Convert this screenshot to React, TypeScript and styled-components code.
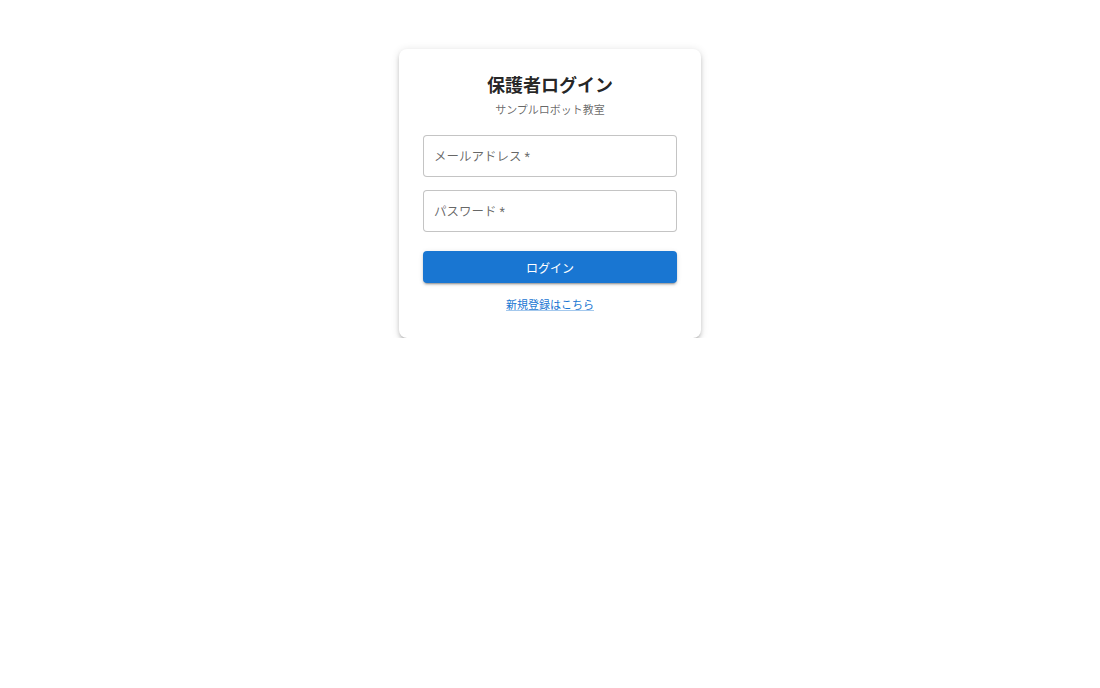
import React, { useState } from 'react';
import styled, { createGlobalStyle } from 'styled-components';

const GlobalStyle = createGlobalStyle`
  body {
    margin: 0;
    background: #ffffff;
    font-family: Roboto, "Noto Sans CJK JP", "Noto Sans", sans-serif;
    color: rgba(0, 0, 0, 0.87);
  }
  * {
    box-sizing: border-box;
  }
`;

export default function App() {
  const [email, setEmail] = useState('');
  const [password, setPassword] = useState('');

  return (
    <>
      <GlobalStyle />
      <Page>
        <Card>
          <Title>保護者ログイン</Title>
          <Subtitle>サンプルロボット教室</Subtitle>
          <Form onSubmit={(e) => e.preventDefault()}>
            <Field
              type="email"
              placeholder="メールアドレス *"
              value={email}
              onChange={(e) => setEmail(e.target.value)}
            />
            <Field
              type="password"
              placeholder="パスワード *"
              value={password}
              onChange={(e) => setPassword(e.target.value)}
            />
            <SubmitButton type="submit">ログイン</SubmitButton>
          </Form>
          <SignupLink href="#">新規登録はこちら</SignupLink>
        </Card>
      </Page>
    </>
  );
}

const Page = styled.div`
  display: flex;
  justify-content: center;
  padding-top: 49px;
`;

const Card = styled.div`
  width: 302px;
  padding: 23px 24px 24px;
  background: #fff;
  border-radius: 8px;
  box-shadow: 0px 3px 3px -2px rgba(0, 0, 0, 0.2),
    0px 3px 4px 0px rgba(0, 0, 0, 0.14), 0px 1px 8px 0px rgba(0, 0, 0, 0.12);
  display: flex;
  flex-direction: column;
  align-items: center;
`;

const Title = styled.h1`
  margin: 0;
  font-size: 18px;
  font-weight: 700;
  line-height: 27px;
  color: rgba(0, 0, 0, 0.87);
`;

const Subtitle = styled.p`
  margin: 3px 0 0;
  font-size: 11px;
  line-height: 17px;
  color: rgba(0, 0, 0, 0.6);
`;

const Form = styled.form`
  width: 100%;
  margin-top: 16px;
  display: flex;
  flex-direction: column;
`;

const Field = styled.input`
  width: 100%;
  height: 42px;
  margin-bottom: 13px;
  padding: 0 10px;
  border: 1px solid rgba(0, 0, 0, 0.23);
  border-radius: 4px;
  font-family: inherit;
  font-size: 12.5px;
  color: rgba(0, 0, 0, 0.87);
  outline: none;

  &::placeholder {
    color: rgba(0, 0, 0, 0.6);
  }

  &:focus {
    border: 2px solid #1976d2;
    padding: 0 9px;
  }
`;

const SubmitButton = styled.button`
  margin-top: 6px;
  height: 32px;
  border: none;
  border-radius: 4px;
  background: #1976d2;
  color: #fff;
  font-family: inherit;
  font-size: 12px;
  cursor: pointer;
  box-shadow: 0px 3px 1px -2px rgba(0, 0, 0, 0.2),
    0px 2px 2px 0px rgba(0, 0, 0, 0.14), 0px 1px 5px 0px rgba(0, 0, 0, 0.12);

  &:hover {
    background: #1565c0;
  }
`;

const SignupLink = styled.a`
  margin-top: 14px;
  font-size: 11px;
  line-height: 17px;
  color: #1976d2;
  text-decoration: underline;
  text-decoration-color: rgba(25, 118, 210, 0.4);
`;
